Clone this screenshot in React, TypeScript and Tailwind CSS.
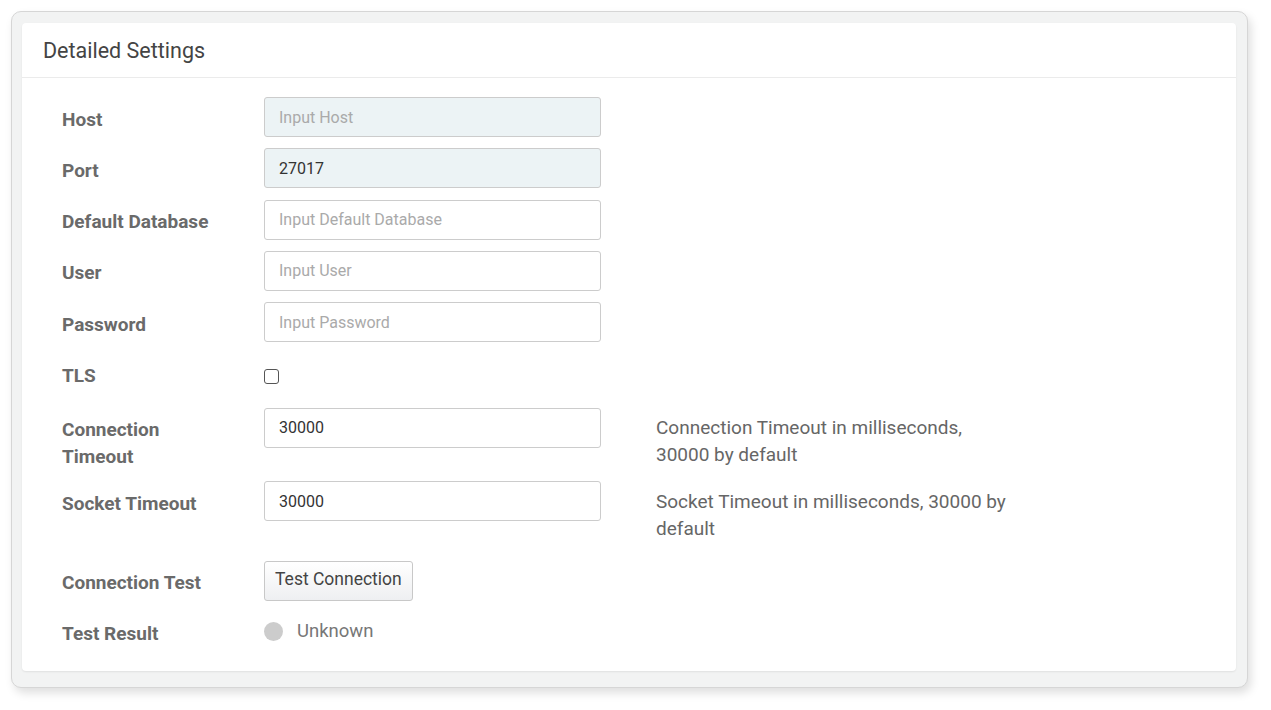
import React from "react";

const font = { fontFamily: "Roboto, 'Noto Sans', sans-serif" };

function Label({ children }: { children: React.ReactNode }) {
  return (
    <div className="w-[202px] shrink-0 pr-[40px] pt-[8.5px] text-[19px] font-bold leading-[27px] text-[#6a6a6a]">
      {children}
    </div>
  );
}

function TextInput({ value, placeholder, disabled }: { value?: string; placeholder?: string; disabled?: boolean }) {
  return (
    <input
      readOnly
      value={value ?? ""}
      placeholder={placeholder}
      className={`h-[40px] w-[337px] shrink-0 rounded-[3px] border border-[#cccccc] px-[14px] text-[16px] text-[#333] outline-none placeholder:text-[#aaa] ${
        disabled ? "bg-[#ecf3f5]" : "bg-white"
      }`}
    />
  );
}

function Help({ children }: { children: React.ReactNode }) {
  return <div className="ml-[55px] w-[350px] pt-[6.5px] text-[19px] leading-[27px] text-[#666]">{children}</div>;
}

export default function App() {
  return (
    <div className="min-h-screen bg-white p-[11px]" style={font}>
      <div className="w-[1237px] rounded-[10px] border border-[#d6d6d6] bg-[#f2f3f3] pb-[16px] pl-[10px] pr-[11px] pt-[11px] shadow-[3px_5px_10px_rgba(0,0,0,0.13)]">
        <div className="rounded-[4px] bg-white shadow-[0_1px_2px_rgba(0,0,0,0.08)]">
          <div className="flex h-[55px] items-center border-b border-[#ebebeb] pl-[21px] pt-[3px] text-[21.5px] text-[#444]">
            Detailed Settings
          </div>

          <div className="px-[40px] pb-[24px] pt-[19px]">
            <div className="mb-[11.25px] flex items-start">
              <Label>Host</Label>
              <TextInput placeholder="Input Host" disabled />
            </div>
            <div className="mb-[11.25px] flex items-start">
              <Label>Port</Label>
              <TextInput value="27017" disabled />
            </div>
            <div className="mb-[11.25px] flex items-start">
              <Label>Default Database</Label>
              <TextInput placeholder="Input Default Database" />
            </div>
            <div className="mb-[11.25px] flex items-start">
              <Label>User</Label>
              <TextInput placeholder="Input User" />
            </div>
            <div className="mb-[11.25px] flex items-start">
              <Label>Password</Label>
              <TextInput placeholder="Input Password" />
            </div>
            <div className="mb-[11.25px] flex h-[43px] items-start">
              <Label>TLS</Label>
              <div className="mt-[16px] h-[15px] w-[15px] rounded-[3px] border border-[#555] bg-white" />
            </div>
            <div className="mb-[11.25px] flex items-start">
              <Label>
                Connection
                <br />
                Timeout
              </Label>
              <TextInput value="30000" />
              <Help>Connection Timeout in milliseconds, 30000 by default</Help>
            </div>
            <div className="mb-[11.25px] flex min-h-[68px] items-start">
              <Label>Socket Timeout</Label>
              <TextInput value="30000" />
              <Help>Socket Timeout in milliseconds, 30000 by default</Help>
            </div>
            <div className="mb-[11.25px] flex items-start">
              <Label>Connection Test</Label>
              <button className="h-[40px] rounded-[3px] border border-[#c8c8c8] bg-gradient-to-b from-white to-[#eeeff1] px-[10px] pb-[3px] text-[17.5px] text-[#444]">
                Test Connection
              </button>
            </div>
            <div className="flex items-start">
              <Label>Test Result</Label>
              <div className="flex items-center pt-[10px]">
                <div className="h-[19px] w-[19px] rounded-full bg-[#cccccc]" />
                <span className="ml-[14px] text-[18.5px] leading-[19px] text-[#777]">Unknown</span>
              </div>
            </div>
          </div>
        </div>
      </div>
    </div>
  );
}
